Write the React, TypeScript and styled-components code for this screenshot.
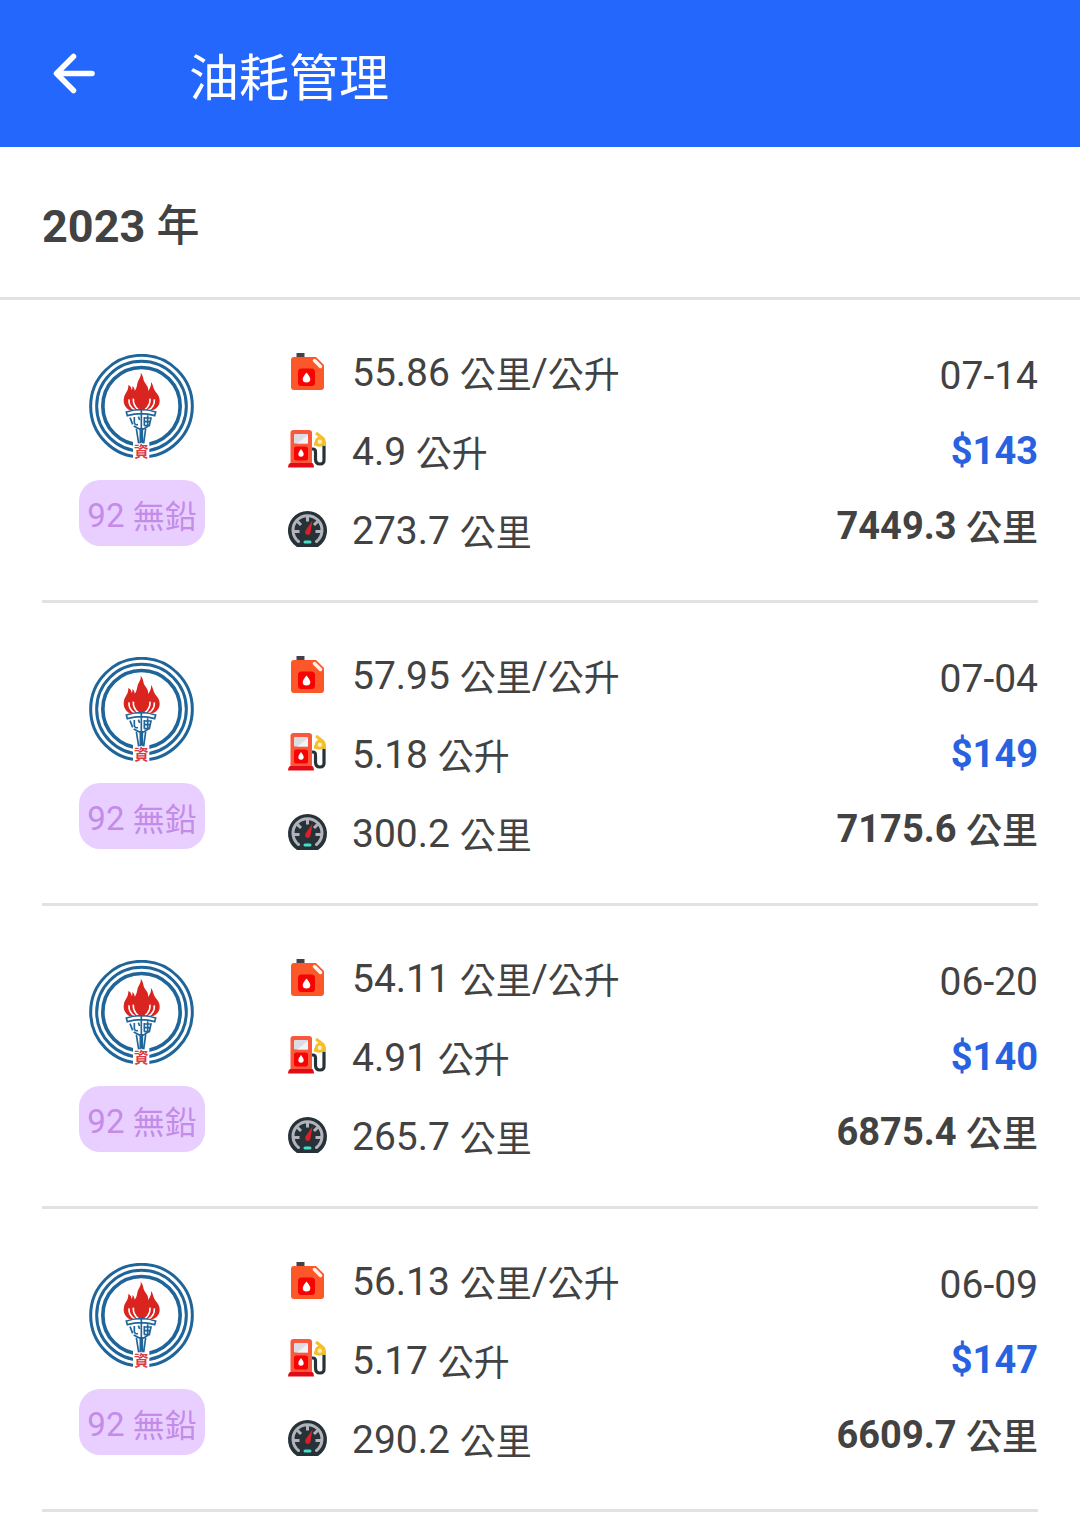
import React from "react";
import styled, { createGlobalStyle } from "styled-components";

const GlobalStyle = createGlobalStyle`
  *, *::before, *::after { box-sizing: border-box; }
  body {
    margin: 0;
    background: #ffffff;
    color: #424242;
    font-family: Roboto, "Noto Sans CJK TC", sans-serif;
  }
`;

const AppBar = styled.header`
  display: flex;
  align-items: center;
  gap: 91px;
  padding: 24px 50px;
  background: #2467fc;
  color: #ffffff;
`;

const BackButton = styled.button`
  display: flex;
  padding: 0;
  border: 0;
  background: none;
  color: inherit;
  cursor: pointer;
`;

const Title = styled.h1`
  margin: 0;
  padding-top: 11px;
  font-size: 50px;
  font-weight: 400;
  line-height: 88px;
`;

const YearHeading = styled.h2`
  margin: 0;
  padding: 50px 42px 40px;
  border-bottom: 3px solid #e2e2e2;
  font-size: 45px;
  font-weight: 700;
  line-height: 60px;
`;

const Unit = styled.span<{ $size: number; $shift?: number; $medium?: boolean }>`
  font-size: ${(p) => p.$size}px;
  font-weight: ${(p) => (p.$medium ? 500 : 400)};
  line-height: 1;
  vertical-align: ${(p) => p.$shift ?? 0}px;
`;

const RecordList = styled.ul`
  margin: 0;
  padding: 0 42px;
  list-style: none;
`;

const Record = styled.li`
  display: grid;
  grid-template-columns: 200px 1fr auto;
  column-gap: 46px;
  padding: 34px 0 29px;
  border-bottom: 3px solid #e2e2e2;
`;

const Station = styled.div`
  display: flex;
  flex-direction: column;
  align-items: center;
  gap: 14px;
  padding-top: 20px;
`;

const FuelBadge = styled.span`
  padding: 6px 8px 0;
  border-radius: 21px;
  background: #e8cfff;
  color: #c48be8;
  font-size: 33px;
  line-height: 60px;
  white-space: nowrap;
`;

const Metrics = styled.div`
  display: flex;
  flex-direction: column;
`;

const Metric = styled.div`
  display: flex;
  align-items: center;
  gap: 24px;
  font-size: 39px;
  line-height: 79px;
  white-space: nowrap;

  svg {
    margin-bottom: 3px;
    overflow: visible;
  }
`;

const Summary = styled.div`
  display: flex;
  flex-direction: column;
  padding-top: 5px;
  font-size: 38px;
  line-height: 75px;
  text-align: right;
  white-space: nowrap;
`;

const RefuelDate = styled.time`
  font-size: 39px;
`;

const Price = styled.strong`
  color: #2962e0;
`;

const BackIcon = () => (
  <svg width="48" height="48" viewBox="0 0 48 48" fill="none" stroke="currentColor" strokeWidth="5.500" strokeLinecap="round" strokeLinejoin="round" aria-hidden="true">
    <path d="M42 23.500H7M23.500 6.500L6.500 23.500L23.500 40.500" />
  </svg>
);

const StationLogo = () => (
  <svg width="106" height="112" viewBox="27 28 318 336" role="img" aria-label="CPC">
    <g fill="none" stroke="#1f659a">
      <circle cx="184.500" cy="184.500" r="152.500" strokeWidth="9" />
      <circle cx="184.500" cy="184.500" r="134.500" strokeWidth="9" />
      <circle cx="184.500" cy="184.500" r="116" strokeWidth="11" />
    </g>
    <path d="M159 288h49v58h-49z" fill="#fff" />
    <path
      d="M150 197C136 190 128 175 132 159C135 145 146 139 145 121C151 123 154 129 155 136C158 132 158 127 156 124C161 126 164 132 164 138C173 128 170 116 176 106C179 99 184 94 182 84C191 93 189 105 194 113C199 122 206 126 204 139C210 132 215 122 213 112C219 119 219 128 223 135C227 144 239 151 239 168C239 183 230 192 216 197Z"
      fill="#d9241f"
    />
    <path d="M147 164C146 180 153 190 165 196M160 162C159 177 166 188 175 195M223 164C224 180 217 190 205 196M210 162C211 177 204 188 195 195" fill="none" stroke="#fff" strokeWidth="5" />
    <g fill="none" stroke="#1f659a" strokeWidth="5">
      <path d="M139 202Q184 187 227 202L224 213Q184 201 142 213ZM184 197V292" />
      <path d="M150 219L158 239M163 217V233Q164 242 174 240M175 216L179 226M193 217V243M193 220H213L208 243H193M194 231H210M203 212V243" />
      <path d="M161 244L180 254M205 244L189 254M169 252L176 296M197 252L191 296M181 250V296M187 250V296" />
    </g>
    <text x="184" y="337" textAnchor="middle" fontSize="44" fontWeight="700" fill="#dc3a40" fontFamily="Noto Sans CJK TC, sans-serif">資</text>
  </svg>
);

const CanIcon = () => (
  <svg width="40" height="40" viewBox="0 0 40 40" aria-hidden="true">
    <path d="M8.500 1h8v5h-8z" fill="#434047" />
    <path d="M6 5h22l8 8v22a3 3 0 0 1-3 3H6a3 3 0 0 1-3-3V8a3 3 0 0 1 3-3z" fill="#fc5729" />
    <path d="M26.500 8.500L32.500 14.500" stroke="#fff3ec" strokeWidth="3.500" strokeLinecap="round" />
    <rect x="10" y="16.500" width="17" height="17.500" rx="3.500" fill="#f60404" />
    <path d="M18.500 20.500q3.800 4.600 3.800 6.600a3.800 3.500 0 0 1-7.600 0q0-2 3.800-6.600z" fill="#fff" />
  </svg>
);

const PumpIcon = () => (
  <svg width="40" height="40" viewBox="0 1 40 40" aria-hidden="true">
    <path d="M23 19h2q2.500 0 2.500 3v7q0 5 4.500 5t4-5V15" fill="none" stroke="#263238" strokeWidth="3.200" />
    <path d="M28 3L35 8.500Q37 11 36.500 16" fill="none" stroke="#f5bf2b" strokeWidth="3" strokeLinejoin="round" />
    <path d="M26 13.500L31 15" stroke="#f5bf2b" strokeWidth="3.500" />
    <circle cx="31.800" cy="11.800" r="3.600" fill="#fbeeb8" stroke="#f5bf2b" strokeWidth="2.800" />
    <rect x="2.500" y="0" width="21.500" height="35" rx="3" fill="#f9583c" />
    <rect x="6" y="4" width="14" height="9.500" rx="1" fill="#dadde3" />
    <path d="M9 13.500L20 5v8.500z" fill="#f1f3f6" />
    <rect x="6" y="16.500" width="14" height="14" rx="2.500" fill="#f60404" />
    <path d="M13 19q2.700 3.400 2.700 5a2.700 2.700 0 0 1-5.400 0q0-1.600 2.700-5z" fill="#fff" />
    <path d="M2 33h22.500q1.500 1 1.500 4.500H0Q0 34 2 33z" fill="#e10b17" />
  </svg>
);

const GaugeIcon = () => (
  <svg width="40" height="40" viewBox="0 0 40 40" aria-hidden="true">
    <path d="M9 37A19.500 19.500 0 1 1 30 37Z" fill="#263238" />
    <path d="M10.500 31.500A14.500 14.500 0 1 1 28.500 31.500" fill="none" stroke="#b3b4bb" strokeWidth="3" strokeLinecap="round" />
    <path d="M19.500 6v5.500M6 21.500h5.500M27.500 21.500h5.500M9.500 11.500l3.500 3.500M29.500 11.500l-3.500 3.500" stroke="#b3b4bb" strokeWidth="3" />
    <path d="M24.500 10.500L17.200 21Q16.800 24.500 19.500 25Q22 25 22.500 22.500Z" fill="#da2027" />
    <path d="M17 32h5" stroke="#45dfc5" strokeWidth="3" strokeLinecap="round" />
  </svg>
);

type FuelRecord = {
  date: string;
  economy: string;
  litres: string;
  distance: string;
  price: string;
  odometer: string;
};

const records: FuelRecord[] = [
  { date: "07-14", economy: "55.86", litres: "4.9", distance: "273.7", price: "$143", odometer: "7449.3" },
  { date: "07-04", economy: "57.95", litres: "5.18", distance: "300.2", price: "$149", odometer: "7175.6" },
  { date: "06-20", economy: "54.11", litres: "4.91", distance: "265.7", price: "$140", odometer: "6875.4" },
  { date: "06-09", economy: "56.13", litres: "5.17", distance: "290.2", price: "$147", odometer: "6609.7" },
];

export default function App() {
  return (
    <>
      <GlobalStyle />
      <AppBar>
        <BackButton type="button" aria-label="返回">
          <BackIcon />
        </BackButton>
        <Title>油耗管理</Title>
      </AppBar>
      <main>
        <YearHeading>
          2023 <Unit $size={43} $shift={1} $medium>年</Unit>
        </YearHeading>
        <RecordList>
          {records.map((record) => (
            <Record key={record.date}>
              <Station>
                <StationLogo />
                <FuelBadge>
                  92 <Unit $size={32} $shift={-1}>無鉛</Unit>
                </FuelBadge>
              </Station>
              <Metrics>
                <Metric>
                  <CanIcon />
                  <span>
                    {record.economy} <Unit $size={36} $shift={-2}>公里</Unit>/<Unit $size={36} $shift={-2}>公升</Unit>
                  </span>
                </Metric>
                <Metric>
                  <PumpIcon />
                  <span>
                    {record.litres} <Unit $size={36} $shift={-2}>公升</Unit>
                  </span>
                </Metric>
                <Metric>
                  <GaugeIcon />
                  <span>
                    {record.distance} <Unit $size={36} $shift={-2}>公里</Unit>
                  </span>
                </Metric>
              </Metrics>
              <Summary>
                <RefuelDate dateTime={`2023-${record.date}`}>{record.date}</RefuelDate>
                <Price>{record.price}</Price>
                <strong>
                  {record.odometer} <Unit $size={36} $shift={-2} $medium>公里</Unit>
                </strong>
              </Summary>
            </Record>
          ))}
        </RecordList>
      </main>
    </>
  );
}
